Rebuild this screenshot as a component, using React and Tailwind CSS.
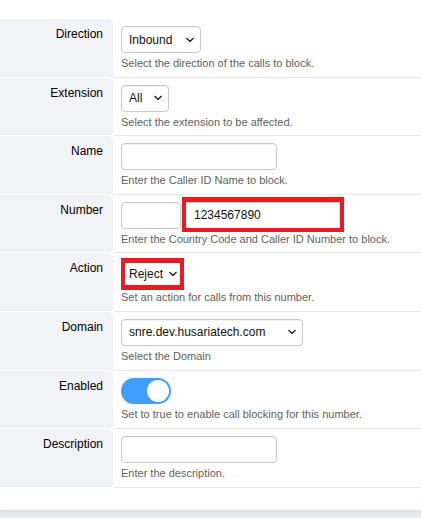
import { useState } from 'react';

const Chevron = () => (
  <svg
    className="pointer-events-none absolute right-[7px] top-1/2 -translate-y-1/2"
    width="8"
    height="5"
    viewBox="0 0 8 5"
    fill="none"
  >
    <path d="M0.8 0.8L4 4L7.2 0.8" stroke="#222" strokeWidth="1.3" strokeLinecap="round" strokeLinejoin="round" />
  </svg>
);

const Select = ({ value, options, width, bordered = true }) => (
  <div className={`relative ${width}`}>
    <select
      defaultValue={value}
      className={`h-[27px] w-full appearance-none rounded-[4px] bg-white pl-[7px] pr-[12px] text-[12px] text-[#111] outline-none ${
        bordered ? 'border border-[#c9c9c9] shadow-[inset_0_1px_1px_rgba(0,0,0,0.05)]' : 'border border-transparent'
      }`}
    >
      {options.map(o => (
        <option key={o}>{o}</option>
      ))}
    </select>
    <Chevron />
  </div>
);

const Input = ({ width, value = '' }) => (
  <input
    defaultValue={value}
    className={`h-[27px] ${width} rounded-[4px] border border-[#c9c9c9] bg-white px-[8px] text-[12px] text-[#111] shadow-[inset_0_1px_1px_rgba(0,0,0,0.05)] outline-none`}
  />
);

const Help = ({ children }) => (
  <p className="mt-[3px] text-[11px] leading-[15px] text-[#5f5f5f]">{children}</p>
);

const Row = ({ label, children }) => (
  <div className="flex h-[58.6px]">
    <div className="mb-px w-[113px] shrink-0 rounded-tr-[5px] bg-[#f2f3f7] pr-[10px] pt-[7px] text-right text-[12px] leading-[17px] text-black">
      {label}
    </div>
    <div className="ml-px flex-1 border-b border-[#e5e8ee] pl-[7px] pt-[7px]">{children}</div>
  </div>
);

const App = () => {
  const [enabled, setEnabled] = useState(true);

  return (
    <div className="min-h-screen bg-[#e9ecf1] font-['Liberation_Sans',Arial,sans-serif]">
      <div className="bg-white pb-[22px] pt-[19px] shadow-[0_2px_5px_rgba(0,0,0,0.07)]">
        <Row label="Direction">
          <Select value="Inbound" options={['Inbound', 'Outbound']} width="w-[80px]" />
          <Help>Select the direction of the calls to block.</Help>
        </Row>
        <Row label="Extension">
          <Select value="All" options={['All']} width="w-[48px]" />
          <Help>Select the extension to be affected.</Help>
        </Row>
        <Row label="Name">
          <Input width="w-[156px]" />
          <Help>Enter the Caller ID Name to block.</Help>
        </Row>
        <Row label="Number">
          <div className="flex gap-[4px]">
            <Input width="w-[60px]" />
            <div className="relative">
              <Input width="w-[156px]" value="1234567890" />
              <div className="pointer-events-none absolute left-[-3px] top-[-5px] h-[35px] w-[162px] border-4 border-t-[5px] border-[#ea1a23]" />
            </div>
          </div>
          <Help>Enter the Country Code and Caller ID Number to block.</Help>
        </Row>
        <Row label="Action">
          <div className="relative w-[63px]">
            <Select value="Reject" options={['Reject', 'Busy', 'Hold', 'Voicemail']} width="w-[63px]" bordered={false} />
            <div className="pointer-events-none absolute left-0 top-[-2px] h-[32px] w-[63px] border-x-4 border-y-[5px] border-[#ea1a23]" />
          </div>
          <Help>Set an action for calls from this number.</Help>
        </Row>
        <Row label="Domain">
          <Select value="snre.dev.husariatech.com" options={['snre.dev.husariatech.com']} width="w-[182px]" />
          <Help>Select the Domain</Help>
        </Row>
        <Row label="Enabled">
          <button
            type="button"
            onClick={() => setEnabled(v => !v)}
            className={`flex h-[26px] w-[50px] items-center rounded-full px-[2px] ${
              enabled ? 'justify-end bg-[#409eff]' : 'justify-start bg-[#ccc]'
            }`}
          >
            <span className="h-[22px] w-[22px] rounded-full bg-white" />
          </button>
          <Help>Set to true to enable call blocking for this number.</Help>
        </Row>
        <Row label="Description">
          <Input width="w-[156px]" />
          <Help>Enter the description.</Help>
        </Row>
      </div>
    </div>
  );
};

export default App;
